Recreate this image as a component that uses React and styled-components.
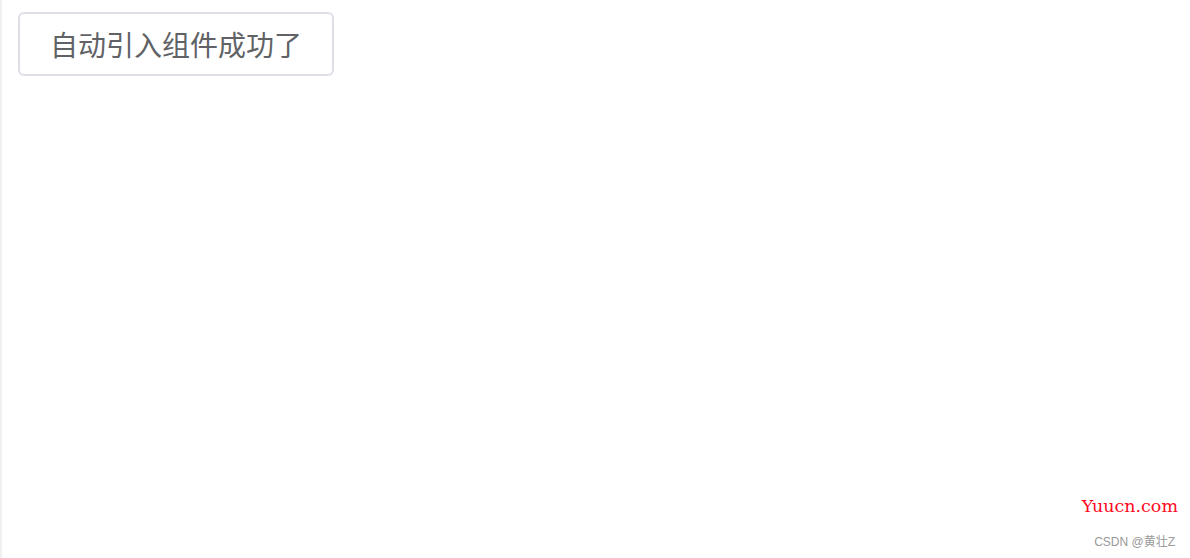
import React from "react";
import styled, { createGlobalStyle } from "styled-components";

const GlobalStyle = createGlobalStyle`
  html, body {
    margin: 0;
    padding: 0;
    background: #fff;
  }
  body {
    font-family: "Noto Sans CJK SC", "Liberation Sans", sans-serif;
  }
`;

const Page = styled.div`
  box-sizing: border-box;
  height: 558px;
  border-left: 2px solid #f0f0f0;
  display: flex;
  flex-direction: column;
  padding: 12px 12px 9px 16px;
  overflow: hidden;
`;

const Button = styled.button`
  box-sizing: border-box;
  align-self: flex-start;
  width: 316px;
  height: 64px;
  border: 2px solid #dcdfe6;
  border-radius: 6px;
  background: #fff;
  color: #606266;
  font-family: "Noto Sans CJK SC", sans-serif;
  font-size: 28px;
  line-height: 1;
  padding: 0;
  cursor: pointer;
`;

const Footer = styled.div`
  margin-top: auto;
  display: flex;
  flex-direction: column;
  align-items: flex-end;
  gap: 20px;
`;

const Brand = styled.span`
  font-family: "DejaVu Serif", "Liberation Serif", serif;
  font-size: 17.5px;
  line-height: 18px;
  color: #ff0a1e;
  margin-right: 0;
`;

const Credit = styled.span`
  font-family: "Liberation Sans", "Noto Sans CJK SC", sans-serif;
  font-size: 12px;
  line-height: 14px;
  color: #999;
  margin-right: 3px;
`;

const App = () => {
  return (
    <>
      <GlobalStyle />
      <Page>
        <Button>自动引入组件成功了</Button>
        <Footer>
          <Brand>Yuucn.com</Brand>
          <Credit>CSDN @黄壮Z</Credit>
        </Footer>
      </Page>
    </>
  );
};

export default App;
